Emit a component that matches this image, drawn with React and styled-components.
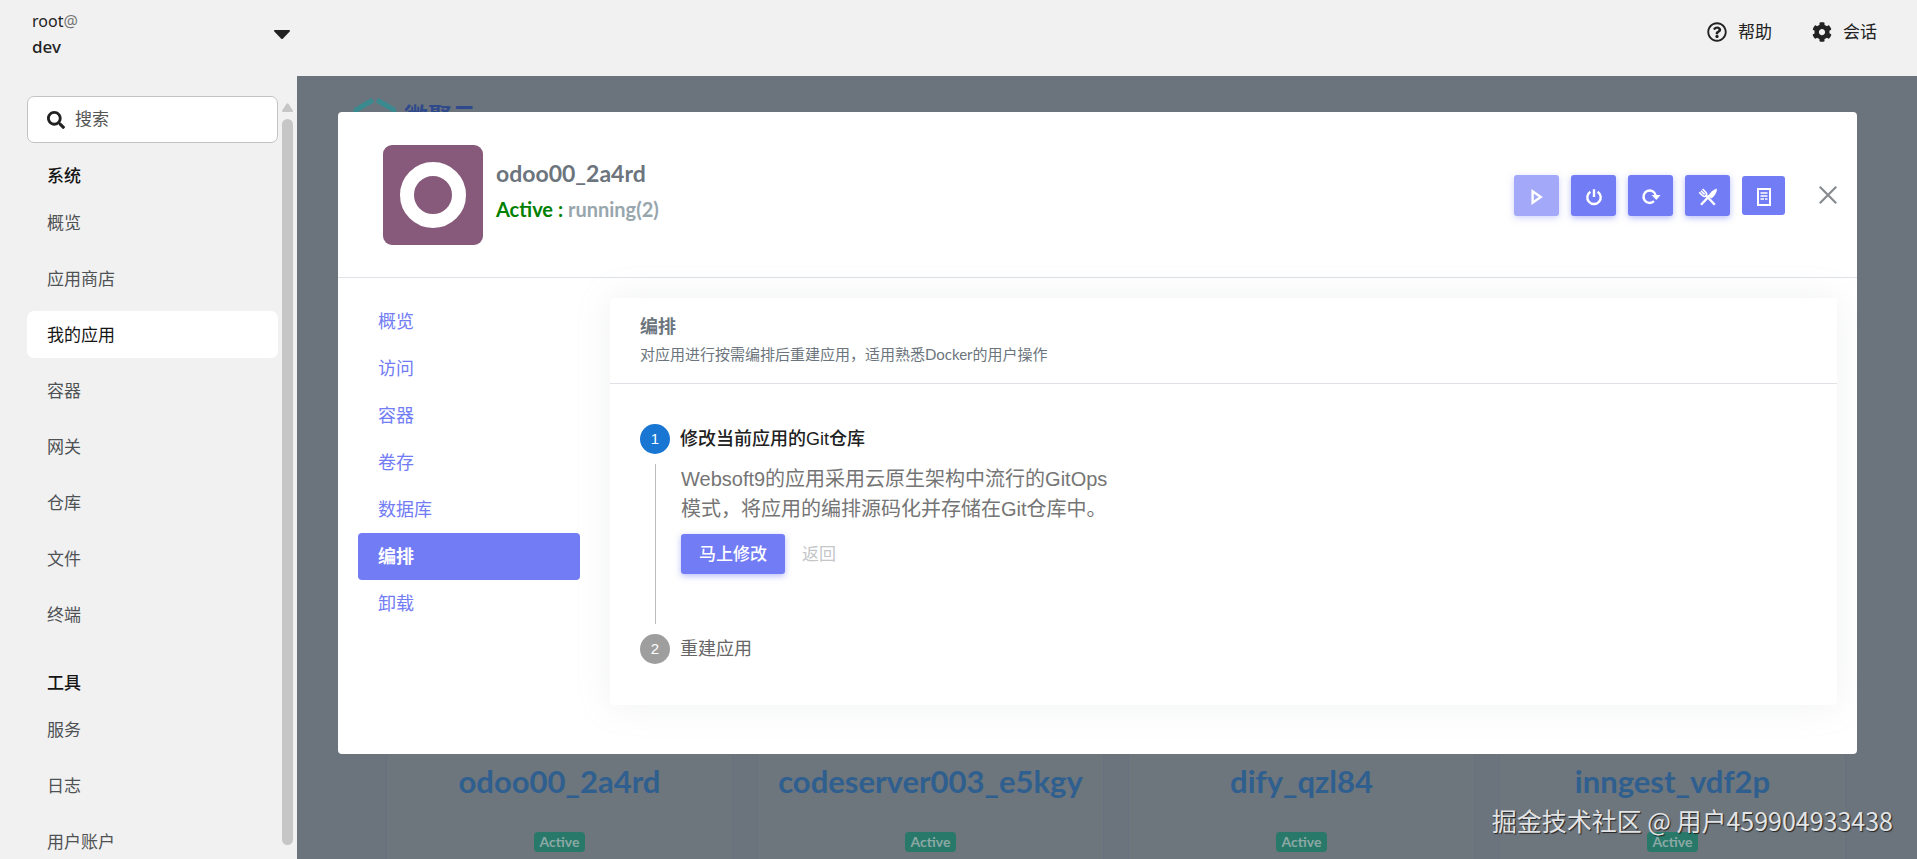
import React from 'react';
import styled, { createGlobalStyle, css } from 'styled-components';
import { FaCog, FaRegQuestionCircle, FaSearch } from 'react-icons/fa';

const shellFont = '"Noto Sans", "Noto Sans CJK SC", sans-serif';
const appFont = 'Lato, "Noto Sans CJK SC", sans-serif';
const stepFont = '"Liberation Sans", "Noto Sans CJK SC", sans-serif';

const GlobalStyle = createGlobalStyle`
  *, *::before, *::after {
    box-sizing: border-box;
  }
  body {
    margin: 0;
    font-family: ${shellFont};
    color: #151515;
  }
  button, input {
    font-family: inherit;
  }
  h1, h2, h3, p, ul, ol {
    margin: 0;
    padding: 0;
  }
  ul, ol {
    list-style: none;
  }
`;

const Shell = styled.div`
  height: 100vh;
  display: grid;
  grid-template-columns: 297px 1fr;
  grid-template-rows: 76px 1fr;
  grid-template-areas: 'host top'
                       'side main';
  background-color: #f1f1f1;
  overflow: hidden;
`;

/* ---- top bar ---- */

const HostButton = styled.button`
  grid-area: host;
  display: flex;
  align-items: center;
  justify-content: space-between;
  padding: 0 7px 8px 32px;
  border: 0;
  background: none;
  color: #222;
  text-align: left;
`;

const HostText = styled.span`
  display: flex;
  flex-direction: column;
  font-size: 17px;
  line-height: 25px;
`;

const HostUser = styled.span`
  font-size: 16px;
`;

const HostAt = styled.span`
  color: #777;
`;

const HostName = styled.strong`
  font-weight: 500;
`;

const TopBar = styled.header`
  grid-area: top;
  display: flex;
  align-items: center;
  justify-content: flex-end;
  gap: 40px;
  padding: 0 40px 12px 0;
`;

const TopButton = styled.button`
  display: flex;
  align-items: center;
  gap: 11px;
  padding: 0;
  border: 0;
  background: none;
  color: #222;
  font-size: 17px;
  line-height: 26px;
`;

/* ---- sidebar ---- */

const Sidebar = styled.aside`
  grid-area: side;
  display: flex;
  min-height: 0;
  padding-top: 20px;
`;

const SideContent = styled.div`
  flex: 1;
  min-height: 0;
  overflow: hidden;
  padding-left: 27px;
`;

const SearchBox = styled.label`
  display: flex;
  align-items: center;
  gap: 10px;
  height: 47px;
  padding: 0 19px;
  border: 1px solid #c3c3c3;
  border-radius: 7px;
  background-color: #fff;
  color: #222;
`;

const SearchInput = styled.input`
  flex: 1;
  min-width: 0;
  padding: 0 0 2px;
  border: 0;
  outline: 0;
  background: none;
  font-size: 17px;
  &::placeholder {
    color: #555;
    opacity: 1;
  }
`;

const NavGroup = styled.nav`
  & + & {
    margin-top: 12px;
  }
`;

const NavTitle = styled.h2`
  padding: 20px 20px 10px;
  font-size: 17px;
  font-weight: 500;
  line-height: 26px;
`;

const NavList = styled.ul`
  display: flex;
  flex-direction: column;
  gap: 9px;
`;

const NavLink = styled.a`
  display: block;
  padding: 0 20px;
  border-radius: 7px;
  font-size: 17px;
  line-height: 47px;
  text-decoration: none;
  color: ${p => (p.$active ? '#151515' : '#4f5255')};
  background-color: ${p => (p.$active ? '#fff' : 'transparent')};
`;

const ScrollTrack = styled.div`
  display: flex;
  flex-direction: column;
  gap: 7px;
  width: 19px;
  padding: 7px 4px 14px 4px;
`;

const ScrollThumb = styled.div`
  flex: 1;
  border-radius: 6px;
  background-color: #c6c6c6;
`;

/* ---- page behind the dialog ---- */

const Main = styled.main`
  grid-area: main;
  position: relative;
  min-width: 0;
  overflow: hidden;
  background-color: #6b747d;
  font-family: ${appFont};
`;

const Brand = styled.div`
  display: flex;
  align-items: flex-start;
  gap: 8px;
  height: 88px;
  padding: 21px 56px 0;
  color: #2f4a8c;
  font-size: 24px;
  font-weight: 700;
  line-height: 38px;
`;

const AppGrid = styled.div`
  display: grid;
  grid-template-columns: repeat(4, 1fr);
  gap: 24px;
  padding: 400px 71px 0 89px;
`;

const AppCard = styled.section`
  display: flex;
  flex-direction: column;
  align-items: center;
  gap: 31px;
  height: 340px;
  padding-top: 196px;
  border: 1px solid #68717d;
  background-color: #6d757d;
`;

const AppTitle = styled.h2`
  font-size: 31px;
  font-weight: 700;
  line-height: 40px;
  color: #2f5f8f;
`;

const Badge = styled.span`
  padding: 0 6px;
  border-radius: 4px;
  background-color: #28796a;
  color: #8ba8a4;
  font-size: 14px;
  font-weight: 700;
  line-height: 20px;
`;

/* ---- dialog ---- */

const Overlay = styled.div`
  position: absolute;
  inset: 0;
  padding: 36px 60px 0 41px;
`;

const Dialog = styled.div`
  border-radius: 4px;
  background-color: #fff;
  color: #6c757d;
  overflow: hidden;
`;

const DialogHeader = styled.div`
  display: flex;
  align-items: center;
  padding: 33px 20px 32px 45px;
  border-bottom: 1px solid #dee2e6;
`;

const AppInfo = styled.div`
  flex: 1;
  padding: 0 13px 8px;
  line-height: 36px;
`;

const AppName = styled.h1`
  font-size: 23px;
  font-weight: 700;
  line-height: 36px;
  color: #6c757d;
`;

const AppStatus = styled.p`
  font-size: 20px;
  font-weight: 700;
  color: #98a6ad;
`;

const StatusLabel = styled.span`
  color: #008000;
`;

const Actions = styled.div`
  display: flex;
  align-items: center;
  gap: 12px;
`;

const primary = css`
  border: 0;
  border-radius: 3px;
  background-color: #727cf5;
  color: #fff;
`;

const ActionButton = styled.button`
  ${primary}
  display: flex;
  align-items: center;
  justify-content: center;
  width: ${p => (p.$flat ? 43 : 45)}px;
  height: ${p => (p.$flat ? 39 : 41)}px;
  padding: 3px 0 0;
  opacity: ${p => (p.disabled ? 0.65 : 1)};
  box-shadow: ${p => (p.$flat ? 'none' : '0 2px 6px 0 rgba(114, 124, 245, 0.5)')};
`;

const CloseButton = styled.button`
  display: flex;
  margin-left: 34px;
  padding: 0;
  border: 0;
  background: none;
  color: #868b90;
`;

const DialogBody = styled.div`
  display: grid;
  grid-template-columns: 222px 1fr;
  align-items: start;
  gap: 30px;
  padding: 20px 20px 49px;
`;

const Tabs = styled.nav`
  display: flex;
  flex-direction: column;
`;

const Tab = styled.a`
  padding: 0 20px;
  border-radius: 4px;
  font-size: 18px;
  line-height: 47px;
  text-decoration: none;
  font-weight: ${p => (p.$active ? 700 : 400)};
  color: ${p => (p.$active ? '#fff' : '#727cf5')};
  background-color: ${p => (p.$active ? '#727cf5' : 'transparent')};
`;

const Panel = styled.section`
  border-radius: 4px;
  background-color: #fff;
  box-shadow: 0 0 35px 0 rgba(154, 161, 171, 0.15);
`;

const PanelHeader = styled.div`
  padding: 14px 30px 15px;
  border-bottom: 1px solid #dee2e6;
  line-height: 28px;
`;

const PanelTitle = styled.h2`
  font-size: 18px;
  font-weight: 700;
`;

const PanelHint = styled.p`
  font-size: 15px;
`;

const Steps = styled.ol`
  display: flex;
  flex-direction: column;
  gap: 10px;
  padding: 40px 30px 41px;
  font-family: ${stepFont};
`;

const StepLabel = styled.div`
  display: flex;
  align-items: center;
  gap: 10px;
  font-size: 18px;
  font-weight: ${p => (p.$active ? 500 : 400)};
  line-height: 30px;
  color: ${p => (p.$active ? '#212121' : '#666')};
`;

const StepNumber = styled.span`
  width: 30px;
  height: 30px;
  border-radius: 50%;
  background-color: ${p => (p.$active ? '#1976d2' : '#9e9e9e')};
  color: #fff;
  font-size: 15px;
  font-weight: 400;
  text-align: center;
`;

const StepContent = styled.div`
  margin: 10px 0 0 15px;
  padding: 0 0 50px 25px;
  border-left: 1px solid #bdbdbd;
`;

const StepText = styled.p`
  max-width: 440px;
  font-size: 20px;
  line-height: 30px;
  color: #757575;
`;

const StepButtons = styled.div`
  display: flex;
  gap: 17px;
  margin-top: 10px;
`;

const StepButton = styled.button`
  ${primary}
  height: 40px;
  padding: 0 18px 3px;
  font-size: 17px;
  font-weight: 500;
  box-shadow: 0 2px 6px 0 rgba(114, 124, 245, 0.5);
`;

const BackButton = styled.button`
  padding: 0 0 3px;
  border: 0;
  background: none;
  color: #c4c6c9;
  font-size: 17px;
`;

const Watermark = styled.div`
  position: absolute;
  right: 24px;
  bottom: 20px;
  color: #e2e4e6;
  font-family: "Noto Sans CJK SC", sans-serif;
  font-size: 25px;
  line-height: 38px;
  text-shadow: 1px 1px 1px #222;
`;

/* ---- drawings ---- */

const OdooLogo = () => (
  <svg width="100" height="100" viewBox="0 0 100 100" aria-hidden="true">
    <rect width="100" height="100" rx="9" fill="#875a7b" />
    <circle cx="50" cy="50" r="26" fill="none" stroke="#fff" strokeWidth="14" />
  </svg>
);

const BrandMark = () => (
  <svg
    width="43"
    height="48"
    viewBox="0 0 43 48"
    fill="none"
    stroke="#3a8a90"
    strokeWidth="5"
    strokeLinejoin="round"
    aria-hidden="true"
  >
    <path d="M20 3 3 13v20M24 3l17 10v20M5 36l17 9 17-9" />
  </svg>
);

const ActionIcon = ({ children }) => (
  <svg
    width="20"
    height="20"
    viewBox="0 0 20 20"
    fill="none"
    stroke="currentColor"
    strokeWidth="2.4"
    aria-hidden="true"
  >
    {children}
  </svg>
);

const actions = [
  {
    label: '启动',
    disabled: true,
    icon: <path d="M5.6 4.2v11.6l8.2-5.8z" />
  },
  {
    label: '停止',
    icon: <path d="M6.4 4.7a6.700 6.700 0 1 0 7.200 0M10 2.200v7.800" />
  },
  {
    label: '重启',
    icon: (
      <>
        <path d="M13 14.200a6.200 6.200 0 1 1 1.800-5.600" />
        <path d="M10.600 8h8.800l-4 5z" fill="currentColor" stroke="none" />
      </>
    )
  },
  {
    label: '修复',
    icon: (
      <>
        <path d="m7.600 8 9.200 9.800" />
        <path
          d="M1.200 5.400 4.600 8.600c1.200 1 2.600 1 3.400.2.900-.9.900-2.200-.2-3.400L4.600 2M2.900 3.700l3.700 3.700"
          strokeWidth="1.6"
        />
        <path d="m3 17.800 9-9.600" />
        <path d="M10.400 8.800C12.200 5.200 14.800 2.600 18.800 1.400c.4 4-2.200 7.600-5.400 10z" fill="currentColor" stroke="none" />
      </>
    )
  },
  {
    label: '日志',
    flat: true,
    icon: (
      <>
        <path d="M4 2h12v16H4z" strokeWidth="2" />
        <path d="M6.500 6h7M6.500 9h7M6.500 12h3.500M11 12h2.500" strokeWidth="1.500" />
      </>
    )
  }
];

const systemLinks = ['概览', '应用商店', '我的应用', '容器', '网关', '仓库', '文件', '终端'];
const toolLinks = ['服务', '日志', '用户账户'];
const tabs = ['概览', '访问', '容器', '卷存', '数据库', '编排', '卸载'];
const apps = ['odoo00_2a4rd', 'codeserver003_e5kgy', 'dify_qzl84', 'inngest_vdf2p'];

const NavSection = ({ title, links, current }) => (
  <NavGroup aria-label={title}>
    <NavTitle>{title}</NavTitle>
    <NavList>
      {links.map(name => (
        <li key={name}>
          <NavLink href="#" $active={name === current}>{name}</NavLink>
        </li>
      ))}
    </NavList>
  </NavGroup>
);

const AppDialog = () => (
  <Dialog role="dialog" aria-labelledby="app-name">
    <DialogHeader>
      <OdooLogo />
      <AppInfo>
        <AppName id="app-name">odoo00_2a4rd</AppName>
        <AppStatus>
          <StatusLabel>Active :</StatusLabel> running(2)
        </AppStatus>
      </AppInfo>
      <Actions>
        {actions.map(a => (
          <ActionButton key={a.label} type="button" aria-label={a.label} disabled={a.disabled} $flat={a.flat}>
            <ActionIcon>{a.icon}</ActionIcon>
          </ActionButton>
        ))}
      </Actions>
      <CloseButton type="button" aria-label="关闭">
        <svg width="18" height="18" viewBox="0 0 18 18" stroke="currentColor" strokeWidth="2.2">
          <path d="M.8.8l16.400 16.400M17.200.8.8 17.200" />
        </svg>
      </CloseButton>
    </DialogHeader>
    <DialogBody>
      <Tabs>
        {tabs.map(name => (
          <Tab key={name} href="#" $active={name === '编排'}>{name}</Tab>
        ))}
      </Tabs>
      <Panel>
        <PanelHeader>
          <PanelTitle>编排</PanelTitle>
          <PanelHint>对应用进行按需编排后重建应用，适用熟悉Docker的用户操作</PanelHint>
        </PanelHeader>
        <Steps>
          <li>
            <StepLabel $active>
              <StepNumber $active>1</StepNumber>
              修改当前应用的Git仓库
            </StepLabel>
            <StepContent>
              <StepText>
                Websoft9的应用采用云原生架构中流行的GitOps模式，将应用的编排源码化并存储在Git仓库中。
              </StepText>
              <StepButtons>
                <StepButton type="button">马上修改</StepButton>
                <BackButton type="button" disabled>返回</BackButton>
              </StepButtons>
            </StepContent>
          </li>
          <li>
            <StepLabel>
              <StepNumber>2</StepNumber>
              重建应用
            </StepLabel>
          </li>
        </Steps>
      </Panel>
    </DialogBody>
  </Dialog>
);

export default function App() {
  return (
    <Shell lang="zh-CN">
      <GlobalStyle />
      <HostButton type="button">
        <HostText>
          <HostUser>root<HostAt>@</HostAt></HostUser>
          <HostName>dev</HostName>
        </HostText>
        <svg width="16" height="9" viewBox="0 0 16 9" fill="currentColor" aria-hidden="true">
          <path d="M1 0h14c.9 0 1.300 1 .7 1.600L9 8.400a1.400 1.400 0 0 1-2 0L.3 1.600C-.3 1 .1 0 1 0z" />
        </svg>
      </HostButton>
      <TopBar>
        <TopButton type="button">
          <FaRegQuestionCircle size={20} />
          帮助
        </TopButton>
        <TopButton type="button">
          <FaCog size={20} />
          会话
        </TopButton>
      </TopBar>

      <Sidebar>
        <SideContent>
          <SearchBox>
            <FaSearch size={18} />
            <SearchInput type="text" placeholder="搜索" aria-label="搜索" />
          </SearchBox>
          <NavSection title="系统" links={systemLinks} current="我的应用" />
          <NavSection title="工具" links={toolLinks} />
        </SideContent>
        <ScrollTrack>
          <svg width="11" height="9" viewBox="0 0 11 9" fill="#c6c6c6" aria-hidden="true">
            <path d="M4.300 1a1.500 1.500 0 0 1 2.400 0L10.800 7.400c.4.800 0 1.600-.8 1.600H1C.2 9-.2 8.200.2 7.400z" />
          </svg>
          <ScrollThumb />
        </ScrollTrack>
      </Sidebar>

      <Main>
        <Brand>
          <BrandMark />
          微聚云
        </Brand>
        <AppGrid>
          {apps.map(name => (
            <AppCard key={name}>
              <AppTitle>{name}</AppTitle>
              <Badge>Active</Badge>
            </AppCard>
          ))}
        </AppGrid>
        <Overlay>
          <AppDialog />
        </Overlay>
        <Watermark>掘金技术社区 @ 用户459904933438</Watermark>
      </Main>
    </Shell>
  );
}
